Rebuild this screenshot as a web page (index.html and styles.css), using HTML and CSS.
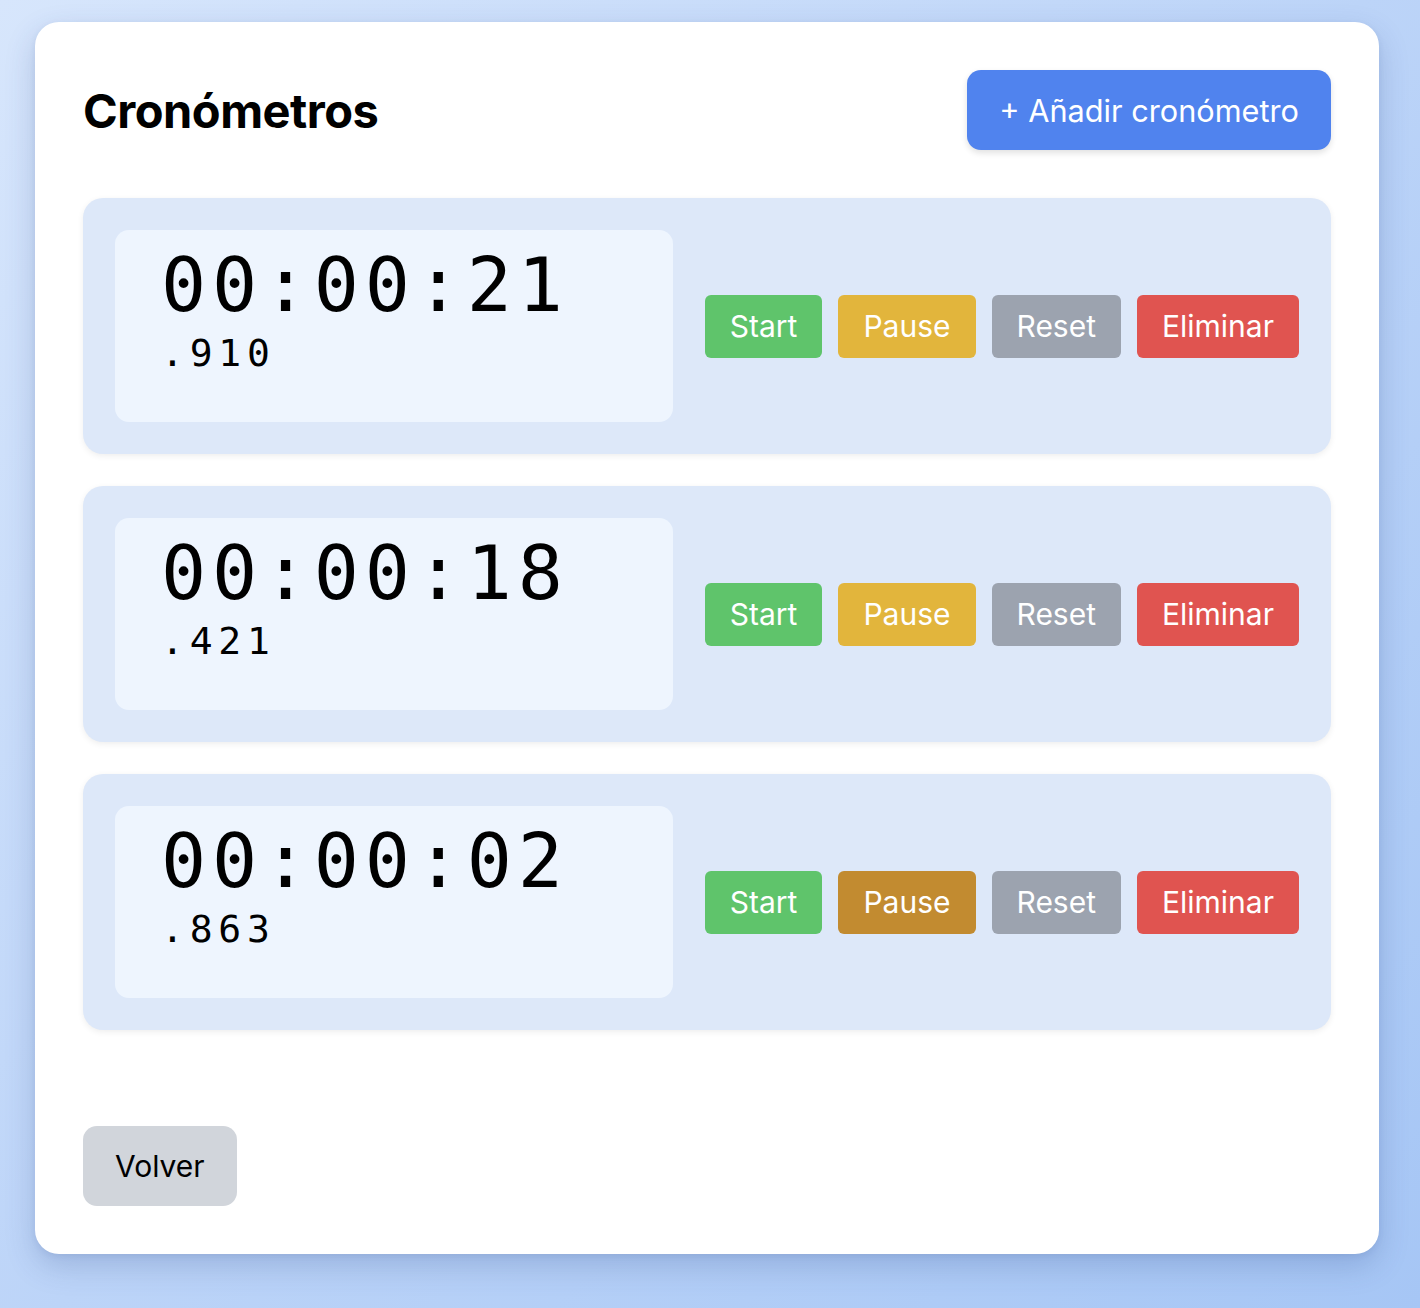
FILE: index.html
```html
<!DOCTYPE html>
<html lang="es">
<head>
<meta charset="utf-8">
<title>Cronómetros</title>
<link rel="stylesheet" href="styles.css">
</head>
<body>
<main class="panel">
  <header class="panel-header">
    <h1 class="title">Cronómetros</h1>
    <button class="btn-add">+ Añadir cronómetro</button>
  </header>

  <section class="timers">
    <div class="timer">
      <div class="display">
        <div class="time">00:00:21</div>
        <div class="ms">.910</div>
      </div>
      <div class="actions">
        <button class="btn btn-start">Start</button>
        <button class="btn btn-pause">Pause</button>
        <button class="btn btn-reset">Reset</button>
        <button class="btn btn-delete">Eliminar</button>
      </div>
    </div>

    <div class="timer">
      <div class="display">
        <div class="time">00:00:18</div>
        <div class="ms">.421</div>
      </div>
      <div class="actions">
        <button class="btn btn-start">Start</button>
        <button class="btn btn-pause">Pause</button>
        <button class="btn btn-reset">Reset</button>
        <button class="btn btn-delete">Eliminar</button>
      </div>
    </div>

    <div class="timer">
      <div class="display">
        <div class="time">00:00:02</div>
        <div class="ms">.863</div>
      </div>
      <div class="actions">
        <button class="btn btn-start">Start</button>
        <button class="btn btn-pause is-active">Pause</button>
        <button class="btn btn-reset">Reset</button>
        <button class="btn btn-delete">Eliminar</button>
      </div>
    </div>
  </section>

  <footer class="panel-footer">
    <button class="btn-back">Volver</button>
  </footer>
</main>
</body>
</html>
```

FILE: styles.css
```css
* {
  box-sizing: border-box;
}

html, body {
  margin: 0;
  height: 100%;
}

body {
  min-height: 1308px;
  padding: 22px 0 0 35px;
  background: linear-gradient(135deg, #d7e6fc 0%, #bcd4f8 50%, #a6c6f5 100%);
  font-family: Inter, "Noto Sans", "Liberation Sans", sans-serif;
  color: #000;
}

.panel {
  width: 1344px;
  padding: 48px;
  background: #fff;
  border-radius: 24px;
  box-shadow: 0 12px 30px rgba(40, 70, 130, 0.22), 0 2px 6px rgba(40, 70, 130, 0.08);
}

.panel-header {
  display: flex;
  align-items: center;
  justify-content: space-between;
  height: 80px;
  margin-bottom: 48px;
}

.title {
  margin: 0;
  font-size: 47px;
  font-weight: 700;
  letter-spacing: -0.5px;
  line-height: 1;
}

.btn-add {
  height: 80px;
  padding: 0 32px;
  border: none;
  border-radius: 14px;
  background: #5083ee;
  color: #fff;
  font-family: inherit;
  font-size: 30.7px;
  box-shadow: 0 3px 6px rgba(0, 0, 0, 0.12);
}

.timers {
  display: flex;
  flex-direction: column;
  gap: 32px;
}

.timer {
  display: flex;
  align-items: center;
  gap: 32px;
  height: 256px;
  padding: 32px;
  background: #dde8f9;
  border-radius: 20px;
  box-shadow: 0 2px 6px rgba(0, 0, 0, 0.07);
}

.display {
  flex: 1;
  height: 192px;
  padding: 18px 46px 0;
  background: #eef5fe;
  border-radius: 14px;
  font-family: "DejaVu Sans Mono", monospace;
  color: #000;
}

.time {
  font-size: 75px;
  line-height: 75px;
  letter-spacing: 5.8px;
}

.ms {
  margin-top: 11px;
  font-size: 38px;
  line-height: 38px;
  letter-spacing: 5.8px;
}

.actions {
  display: flex;
  gap: 16px;
}

.btn {
  height: 63px;
  padding: 0 25px;
  border: none;
  border-radius: 6px;
  color: #fff;
  font-family: inherit;
  font-size: 30px;
}

.btn-start { background: #5fc46b; }
.btn-pause { background: #e2b53c; }
.btn-pause.is-active { background: #c28b30; }
.btn-reset { background: #9ca3af; }
.btn-delete { background: #e05450; }

.panel-footer {
  margin-top: 96px;
}

.btn-back {
  height: 80px;
  padding: 0 32px;
  border: none;
  border-radius: 14px;
  background: #d1d5db;
  color: #000;
  font-family: inherit;
  font-size: 30px;
}
```
